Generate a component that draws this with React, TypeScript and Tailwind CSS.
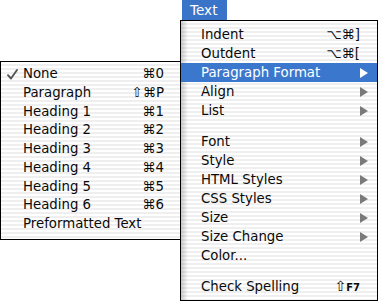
import React from "react";

type Item =
  | { sep: true }
  | { sep?: false; label: string; sc?: React.ReactNode; arrow?: boolean; active?: boolean };

const stripes =
  "bg-[repeating-linear-gradient(180deg,#ffffff_0px,#ffffff_2px,#efefef_2px,#efefef_4px)]";

function Arrow({ white }: { white?: boolean }) {
  return (
    <svg width="8" height="10" viewBox="0 0 8 10" className="block">
      <polygon points="0,0 8,5 0,10" fill={white ? "#ffffff" : "#7a7a7a"} />
    </svg>
  );
}

function Check() {
  return (
    <svg width="11" height="11" viewBox="0 0 11 11" className="block">
      <path d="M1 6.2 L4 9.5 L10 1" fill="none" stroke="#555555" strokeWidth="1.9" strokeLinecap="round" strokeLinejoin="round" />
    </svg>
  );
}

const mainItems: Item[] = [
  { label: "Indent", sc: "⌥⌘]" },
  { label: "Outdent", sc: "⌥⌘[" },
  { label: "Paragraph Format", arrow: true, active: true },
  { label: "Align", arrow: true },
  { label: "List", arrow: true },
  { sep: true },
  { label: "Font", arrow: true },
  { label: "Style", arrow: true },
  { label: "HTML Styles", arrow: true },
  { label: "CSS Styles", arrow: true },
  { label: "Size", arrow: true },
  { label: "Size Change", arrow: true },
  { label: "Color..." },
  { sep: true },
  {
    label: "Check Spelling",
    sc: (
      <span className="flex items-baseline">
        <span className="text-[14px]">⇧</span>
        <span className="text-[10px] font-bold">F7</span>
      </span>
    ),
  },
];

const subItems: { label: string; sc?: string; checked?: boolean }[] = [
  { label: "None", sc: "⌘0", checked: true },
  { label: "Paragraph", sc: "⇧⌘P" },
  { label: "Heading 1", sc: "⌘1" },
  { label: "Heading 2", sc: "⌘2" },
  { label: "Heading 3", sc: "⌘3" },
  { label: "Heading 4", sc: "⌘4" },
  { label: "Heading 5", sc: "⌘5" },
  { label: "Heading 6", sc: "⌘6" },
  { label: "Preformatted Text" },
];

export default function App() {
  return (
    <div className="relative w-[379px] h-[302px] bg-white overflow-hidden font-['DejaVu_Sans',sans-serif] text-[13.3px] text-[#0a0a0a]">
      {/* Menu title */}
      <div className="absolute left-[182px] top-0 w-[45px] h-[20px] bg-[#3a74c8] text-white pl-[8px] leading-[20px] text-[13.6px]">
        Text
      </div>

      {/* Main menu */}
      <div
        className={`absolute left-[180px] top-[20px] w-[198px] h-[281px] border border-black ${stripes} pt-[4px]`}
      >
        <div className="absolute left-0 top-0 bottom-0 w-[7px] bg-gradient-to-r from-black/20 to-transparent" />
        {mainItems.map((it, i) =>
          it.sep ? (
            <div key={i} className="h-[12px]" />
          ) : (
            <div
              key={i}
              className={`relative flex items-center justify-between h-[19px] leading-[19px] pl-[20px] ${
                it.arrow ? "pr-[9px]" : "pr-[17px]"
              } ${it.active ? "bg-[#3b78cd] text-white" : ""}`}
            >
              <span>{it.label}</span>
              {it.arrow ? <Arrow white={it.active} /> : it.sc ? <span>{it.sc}</span> : null}
            </div>
          )
        )}
      </div>

      {/* Submenu */}
      <div
        className={`absolute left-0 top-[61px] w-[181px] h-[179px] border border-black ${stripes} pt-[3px]`}
      >
        {subItems.map((it, i) => (
          <div
            key={i}
            className="flex items-center h-[18.75px] leading-[18.75px] pl-[6px] pr-[16px]"
          >
            <span className="w-[16px] flex items-center">{it.checked ? <Check /> : null}</span>
            <span className="flex-1">{it.label}</span>
            {it.sc ? <span>{it.sc}</span> : null}
          </div>
        ))}
      </div>
    </div>
  );
}
